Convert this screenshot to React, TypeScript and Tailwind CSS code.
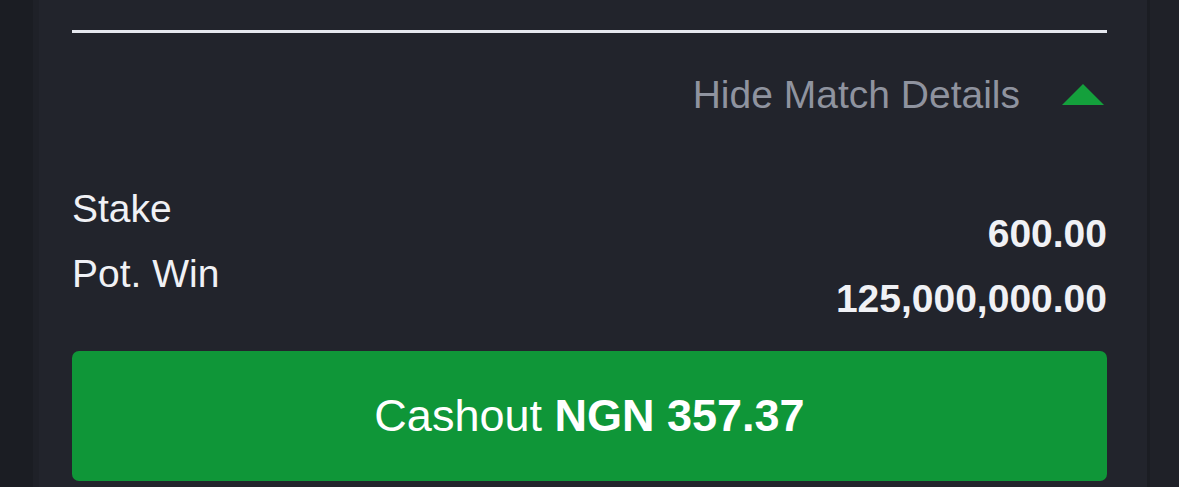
import React from "react";

const font = "font-['Liberation_Sans',Arial,Helvetica,sans-serif]";

const App = () => {
  return (
    <div className={`flex h-[487px] w-full overflow-hidden bg-[#1b1d23] ${font}`}>
      {/* left gutter */}
      <div className="w-[33px] shrink-0 bg-[#1b1d23]" />

      {/* bet card */}
      <div className="flex-1 border-l-[6px] border-r-[3px] border-l-[#1f2128] border-r-[#1b1d23] bg-[#22242c] pl-[33px] pr-[40px] pt-[30px]">
        <div className="h-[3px] w-full bg-[#e6e8ef]" />

        {/* toggle */}
        <div className="mt-[42px] flex items-center justify-end">
          <span className="text-[39px] leading-[39px] text-[#8f939f]">Hide Match Details</span>
          <svg width="42" height="21" viewBox="0 0 42 21" className="ml-[42px] mr-[3px]">
            <polygon points="21,0 42,21 0,21" fill="#14a03c" />
          </svg>
        </div>

        {/* stake / pot win */}
        <div className="mt-[62px] flex justify-between">
          <div className="text-[39px] leading-[65px] text-[#f0f1f5]">
            <div>Stake</div>
            <div>Pot. Win</div>
          </div>
          <div className="mt-[25px] text-right text-[39px] font-bold leading-[65px] text-[#f0f1f5]">
            <div>600.00</div>
            <div>125,000,000.00</div>
          </div>
        </div>

        <button className="mt-[20px] flex h-[130px] w-full items-center justify-center rounded-[7px] bg-[#0f9638] text-[45px] text-white">
          <span>
            Cashout <span className="font-bold">NGN 357.37</span>
          </span>
        </button>
      </div>

      {/* right gutter */}
      <div className="w-[29px] shrink-0 bg-[#1f2128]" />
    </div>
  );
};

export default App;
